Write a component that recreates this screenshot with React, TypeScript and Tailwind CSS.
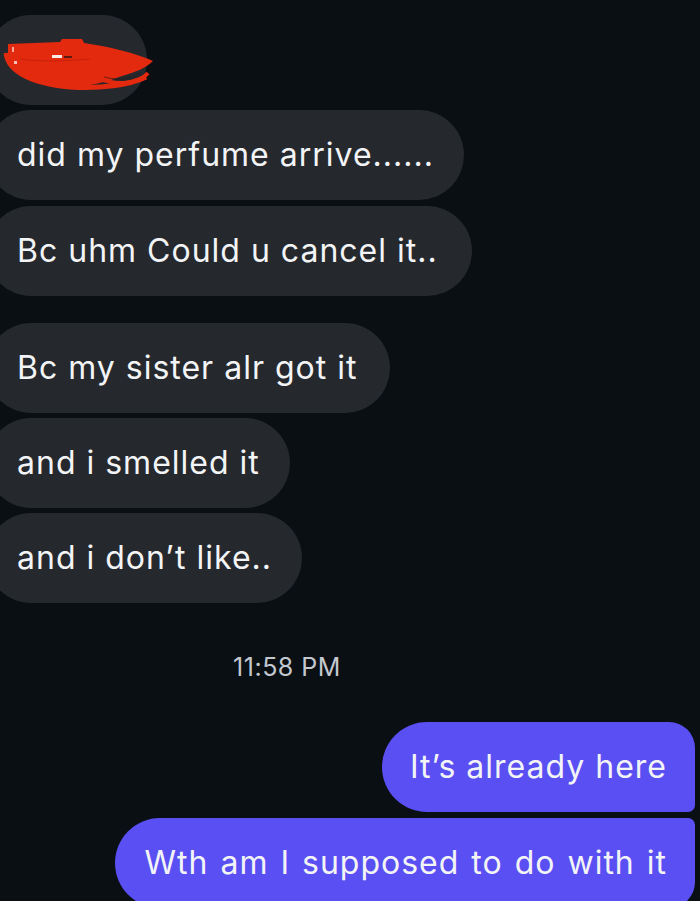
import React from "react";

const font = { fontFamily: 'Inter, "Liberation Sans", Arial, sans-serif' };

function In({ text, className = "" }: { text: string; className?: string }) {
  return (
    <div className={"self-start -ml-[14px] h-[90px] flex items-center rounded-full bg-[#25292e] pl-[31px] pr-[30px] text-[32px] tracking-[1px] text-[#f3f4f6] " + className}>
      {text}
    </div>
  );
}

export default function App() {
  return (
    <div className="w-[700px] h-[901px] overflow-hidden bg-[#0a0f14]" style={font}>
      <div className="flex flex-col pt-[15px]">
        <div className="self-start -ml-[14px] h-[90px] w-[161px] rounded-full bg-[#25292e] relative">
          <svg className="absolute left-[14px] top-0" width="160" height="90" viewBox="0 0 160 90">
            <path d="M8 29 L60 27 L62 24 L82 24 L84 28 L102 31 C122 35 140 40 153 46 C146 53 136 57 122 61 C102 69 80 73 60 71 C32 69 14 60 8 46 Z" fill="#e3290e" />
            <path d="M6 38 C8 56, 30 68, 70 72 C100 74, 130 70, 146 62" stroke="#e3290e" strokeWidth="5" fill="none" />
            <path d="M100 64 C115 70, 138 70, 148 58" stroke="#e3290e" strokeWidth="4" fill="none" />
            <path d="M104 62 C118 66, 132 64, 140 58" stroke="#2a1d1a" strokeWidth="1.2" fill="none" opacity="0.6" />
            <path d="M20 44 C40 47, 70 46, 90 44" stroke="#b01e08" strokeWidth="1" fill="none" opacity="0.6" />
            <rect x="52" y="40" width="10" height="3" fill="#ffffff" opacity="0.9" />
            <rect x="64" y="41" width="8" height="2" fill="#3a1a12" opacity="0.8" />
            <rect x="12" y="32" width="2" height="5" fill="#ffffff" opacity="0.6" />
            <rect x="14" y="46" width="3" height="3" fill="#ffffff" opacity="0.7" />
          </svg>
        </div>
        <In text="did my perfume arrive......" className="mt-[5px]" />
        <In text="Bc uhm Could u cancel it.." className="mt-[6px] pr-[34px]" />
        <In text="Bc my sister alr got it" className="mt-[27px] pr-[33px]" />
        <In text="and i smelled it" className="mt-[5px]" />
        <In text="and i don’t like.." className="mt-[5px]" />
        <div className="mt-[46px] text-center text-[25px] tracking-[0.5px] text-[#c3c8cf] pr-[126px]">11:58 PM</div>
        <div className="mt-[35px] self-end mr-[5px] h-[90px] flex items-center rounded-l-[45px] rounded-tr-[26px] rounded-br-[7px] bg-[#5a4ff3] pl-[28px] pr-[28px] text-[32px] tracking-[1px] text-[#f3f4f6]">
          It’s already here
        </div>
        <div className="mt-[6px] self-end mr-[5px] h-[90px] flex items-center rounded-l-[45px] rounded-tr-[7px] rounded-br-[26px] bg-[#5a4ff3] pl-[29px] pr-[28px] text-[32px] tracking-[1px] [word-spacing:2px] text-[#f3f4f6]">
          Wth am I supposed to do with it
        </div>
      </div>
    </div>
  );
}
